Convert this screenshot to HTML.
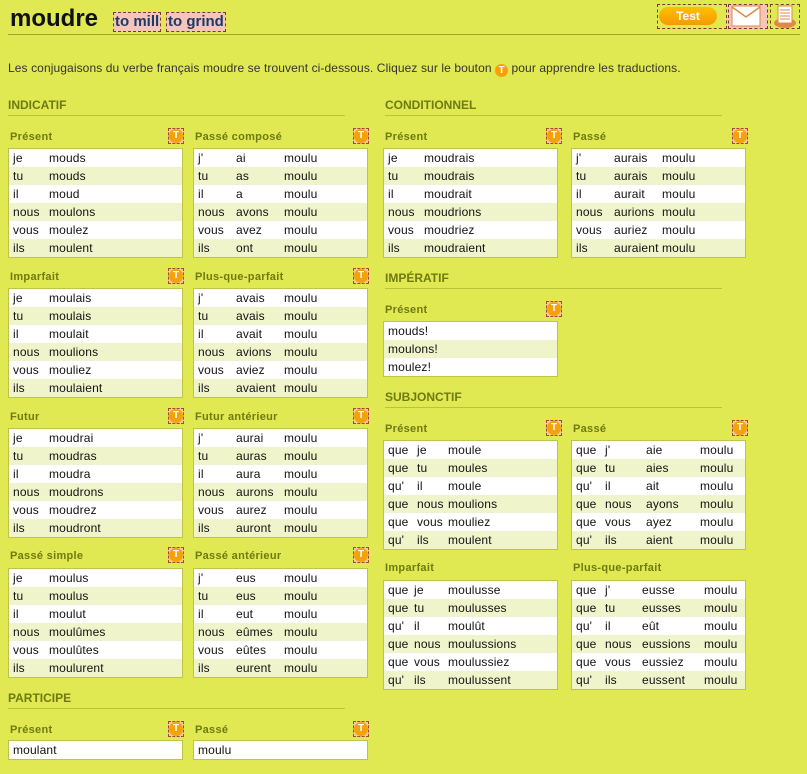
<!DOCTYPE html>
<html><head><meta charset="utf-8"><style>
body{margin:0;width:807px;height:774px;background:#e0e951;font-family:"Liberation Sans",Arial,sans-serif;position:relative;overflow:hidden;color:#111}
.a{position:absolute}
.h{position:absolute;font-size:12px;font-weight:bold;color:#6f7a10;width:337px;border-bottom:1px solid #b9c43a;padding-bottom:3px}
.l{position:absolute;font-size:11px;font-weight:bold;color:#6f7a10;letter-spacing:0.3px}
.t{position:absolute;width:14px;height:14px;border:1px dashed #a05020;background:#f7c7a0}
.t:after{content:"T";position:absolute;left:0;top:0;width:14px;height:14px;border-radius:50%;background:#f5a20a;color:#fff;font-size:10px;font-weight:bold;text-align:center;line-height:14px}
.b{position:absolute;width:173px;border:1px solid #bcc54a;background:#fff}
.r{height:18px;line-height:18px;font-size:12px;display:grid;padding-left:4px;white-space:nowrap;letter-spacing:0.15px}
.r:nth-child(even){background:#eff4cb}
.s .r{grid-template-columns:36px 1fr}
.c .r{grid-template-columns:38px 48px 1fr}
.q .r{grid-template-columns:29px 31px 1fr}
.qp .r{grid-template-columns:29px 41px 54px 1fr}
.qi .r{grid-template-columns:26px 34px 1fr}
.qq .r{grid-template-columns:29px 37px 62px 1fr}
.o .r{grid-template-columns:1fr}
</style></head><body>
<div class="a" style="left:10px;top:5px;font-size:24px;font-weight:bold">moudre</div>
<div class="a" style="left:113px;top:12px;font-size:15px;font-weight:bold;color:#1a3a6a;background:#f6c4b8;border:1px dashed #7a3a2a;padding:0 1px;line-height:18px">to mill</div>
<div class="a" style="left:166px;top:12px;font-size:15px;font-weight:bold;color:#1a3a6a;background:#f6c4b8;border:1px dashed #7a3a2a;padding:0 1px;line-height:18px">to grind</div>
<div class="a" style="left:657px;top:4px;width:68px;height:23px;border:1px dashed #7a3a2a"><div style="margin:2px 0 0 1px;width:58px;height:18px;border-radius:9px;background:linear-gradient(#ffc000,#f59a00);color:#fff;font-weight:bold;font-size:12px;text-align:center;line-height:18px">Test</div></div>
<div class="a" style="left:728px;top:4px;width:38px;height:23px;border:1px dashed #7a3a2a;background:#f6c4b8"><svg width="32" height="22" style="margin-left:2px"><rect x="1" y="1" width="28" height="20" fill="#fff" stroke="#e08a40"/><path d="M1 2 L15 12 L29 2" fill="none" stroke="#e08a40" stroke-width="1.5"/></svg></div>
<div class="a" style="left:770px;top:4px;width:28px;height:23px;border:1px dashed #7a3a2a"><svg width="28" height="23"><ellipse cx="14" cy="18" rx="11" ry="5" fill="#e08a40"/><rect x="7" y="1" width="14" height="17" fill="#fff" stroke="#e08a40"/><path d="M9 5h10M9 8h10M9 11h10M9 14h10" stroke="#e08a40"/></svg></div>
<div class="a" style="left:8px;top:34px;width:792px;height:1px;background:#9aa52a"></div>
<div class="a" style="left:8px;top:61px;font-size:12px;color:#333;letter-spacing:0.1px">Les conjugaisons du verbe français moudre se trouvent ci-dessous. Cliquez sur le bouton <span style="display:inline-block;width:13px;height:13px;border-radius:50%;background:#f5a20a;color:#fff;font-size:10px;font-weight:bold;text-align:center;line-height:13px;vertical-align:-1px;letter-spacing:0">T</span> pour apprendre les traductions.</div>

<div class="h" style="left:8px;top:98px">INDICATIF</div>
<div class="h" style="left:385px;top:98px">CONDITIONNEL</div>
<div class="h" style="left:8px;top:691px">PARTICIPE</div>
<div class="h" style="left:385px;top:271px">IMPÉRATIF</div>
<div class="h" style="left:385px;top:390px">SUBJONCTIF</div>

<div class="l" style="left:10px;top:131px">Présent</div><div class="t" style="left:168px;top:128px"></div>
<div class="b s" style="left:8px;top:148px"><div class="r"><span>je</span><span>mouds</span></div><div class="r"><span>tu</span><span>mouds</span></div><div class="r"><span>il</span><span>moud</span></div><div class="r"><span>nous</span><span>moulons</span></div><div class="r"><span>vous</span><span>moulez</span></div><div class="r"><span>ils</span><span>moulent</span></div></div>
<div class="l" style="left:195px;top:131px">Passé composé</div><div class="t" style="left:353px;top:128px"></div>
<div class="b c" style="left:193px;top:148px"><div class="r"><span>j'</span><span>ai</span><span>moulu</span></div><div class="r"><span>tu</span><span>as</span><span>moulu</span></div><div class="r"><span>il</span><span>a</span><span>moulu</span></div><div class="r"><span>nous</span><span>avons</span><span>moulu</span></div><div class="r"><span>vous</span><span>avez</span><span>moulu</span></div><div class="r"><span>ils</span><span>ont</span><span>moulu</span></div></div>

<div class="l" style="left:10px;top:271px">Imparfait</div><div class="t" style="left:168px;top:268px"></div>
<div class="b s" style="left:8px;top:288px"><div class="r"><span>je</span><span>moulais</span></div><div class="r"><span>tu</span><span>moulais</span></div><div class="r"><span>il</span><span>moulait</span></div><div class="r"><span>nous</span><span>moulions</span></div><div class="r"><span>vous</span><span>mouliez</span></div><div class="r"><span>ils</span><span>moulaient</span></div></div>
<div class="l" style="left:195px;top:271px">Plus-que-parfait</div><div class="t" style="left:353px;top:268px"></div>
<div class="b c" style="left:193px;top:288px"><div class="r"><span>j'</span><span>avais</span><span>moulu</span></div><div class="r"><span>tu</span><span>avais</span><span>moulu</span></div><div class="r"><span>il</span><span>avait</span><span>moulu</span></div><div class="r"><span>nous</span><span>avions</span><span>moulu</span></div><div class="r"><span>vous</span><span>aviez</span><span>moulu</span></div><div class="r"><span>ils</span><span>avaient</span><span>moulu</span></div></div>

<div class="l" style="left:10px;top:411px">Futur</div><div class="t" style="left:168px;top:408px"></div>
<div class="b s" style="left:8px;top:428px"><div class="r"><span>je</span><span>moudrai</span></div><div class="r"><span>tu</span><span>moudras</span></div><div class="r"><span>il</span><span>moudra</span></div><div class="r"><span>nous</span><span>moudrons</span></div><div class="r"><span>vous</span><span>moudrez</span></div><div class="r"><span>ils</span><span>moudront</span></div></div>
<div class="l" style="left:195px;top:411px">Futur antérieur</div><div class="t" style="left:353px;top:408px"></div>
<div class="b c" style="left:193px;top:428px"><div class="r"><span>j'</span><span>aurai</span><span>moulu</span></div><div class="r"><span>tu</span><span>auras</span><span>moulu</span></div><div class="r"><span>il</span><span>aura</span><span>moulu</span></div><div class="r"><span>nous</span><span>aurons</span><span>moulu</span></div><div class="r"><span>vous</span><span>aurez</span><span>moulu</span></div><div class="r"><span>ils</span><span>auront</span><span>moulu</span></div></div>

<div class="l" style="left:10px;top:550px">Passé simple</div><div class="t" style="left:168px;top:547px"></div>
<div class="b s" style="left:8px;top:568px"><div class="r"><span>je</span><span>moulus</span></div><div class="r"><span>tu</span><span>moulus</span></div><div class="r"><span>il</span><span>moulut</span></div><div class="r"><span>nous</span><span>moulûmes</span></div><div class="r"><span>vous</span><span>moulûtes</span></div><div class="r"><span>ils</span><span>moulurent</span></div></div>
<div class="l" style="left:195px;top:550px">Passé antérieur</div><div class="t" style="left:353px;top:547px"></div>
<div class="b c" style="left:193px;top:568px"><div class="r"><span>j'</span><span>eus</span><span>moulu</span></div><div class="r"><span>tu</span><span>eus</span><span>moulu</span></div><div class="r"><span>il</span><span>eut</span><span>moulu</span></div><div class="r"><span>nous</span><span>eûmes</span><span>moulu</span></div><div class="r"><span>vous</span><span>eûtes</span><span>moulu</span></div><div class="r"><span>ils</span><span>eurent</span><span>moulu</span></div></div>

<div class="l" style="left:10px;top:724px">Présent</div><div class="t" style="left:168px;top:721px"></div>
<div class="b o" style="left:8px;top:740px"><div class="r" style="background:#fff">moulant</div></div>
<div class="l" style="left:195px;top:724px">Passé</div><div class="t" style="left:353px;top:721px"></div>
<div class="b o" style="left:193px;top:740px"><div class="r" style="background:#fff">moulu</div></div>

<div class="l" style="left:385px;top:131px">Présent</div><div class="t" style="left:546px;top:128px"></div>
<div class="b s" style="left:383px;top:148px"><div class="r"><span>je</span><span>moudrais</span></div><div class="r"><span>tu</span><span>moudrais</span></div><div class="r"><span>il</span><span>moudrait</span></div><div class="r"><span>nous</span><span>moudrions</span></div><div class="r"><span>vous</span><span>moudriez</span></div><div class="r"><span>ils</span><span>moudraient</span></div></div>
<div class="l" style="left:573px;top:131px">Passé</div><div class="t" style="left:732px;top:128px"></div>
<div class="b c" style="left:571px;top:148px"><div class="r"><span>j'</span><span>aurais</span><span>moulu</span></div><div class="r"><span>tu</span><span>aurais</span><span>moulu</span></div><div class="r"><span>il</span><span>aurait</span><span>moulu</span></div><div class="r"><span>nous</span><span>aurions</span><span>moulu</span></div><div class="r"><span>vous</span><span>auriez</span><span>moulu</span></div><div class="r"><span>ils</span><span>auraient</span><span>moulu</span></div></div>

<div class="l" style="left:385px;top:304px">Présent</div><div class="t" style="left:546px;top:301px"></div>
<div class="b o" style="left:383px;top:321px"><div class="r">mouds!</div><div class="r">moulons!</div><div class="r">moulez!</div></div>

<div class="l" style="left:385px;top:423px">Présent</div><div class="t" style="left:546px;top:420px"></div>
<div class="b q" style="left:383px;top:440px"><div class="r"><span>que</span><span>je</span><span>moule</span></div><div class="r"><span>que</span><span>tu</span><span>moules</span></div><div class="r"><span>qu'</span><span>il</span><span>moule</span></div><div class="r"><span>que</span><span>nous</span><span>moulions</span></div><div class="r"><span>que</span><span>vous</span><span>mouliez</span></div><div class="r"><span>qu'</span><span>ils</span><span>moulent</span></div></div>
<div class="l" style="left:573px;top:423px">Passé</div><div class="t" style="left:732px;top:420px"></div>
<div class="b qp" style="left:571px;top:440px"><div class="r"><span>que</span><span>j'</span><span>aie</span><span>moulu</span></div><div class="r"><span>que</span><span>tu</span><span>aies</span><span>moulu</span></div><div class="r"><span>qu'</span><span>il</span><span>ait</span><span>moulu</span></div><div class="r"><span>que</span><span>nous</span><span>ayons</span><span>moulu</span></div><div class="r"><span>que</span><span>vous</span><span>ayez</span><span>moulu</span></div><div class="r"><span>qu'</span><span>ils</span><span>aient</span><span>moulu</span></div></div>

<div class="l" style="left:385px;top:562px">Imparfait</div>
<div class="b qi" style="left:383px;top:580px"><div class="r"><span>que</span><span>je</span><span>moulusse</span></div><div class="r"><span>que</span><span>tu</span><span>moulusses</span></div><div class="r"><span>qu'</span><span>il</span><span>moulût</span></div><div class="r"><span>que</span><span>nous</span><span>moulussions</span></div><div class="r"><span>que</span><span>vous</span><span>moulussiez</span></div><div class="r"><span>qu'</span><span>ils</span><span>moulussent</span></div></div>
<div class="l" style="left:573px;top:562px">Plus-que-parfait</div>
<div class="b qq" style="left:571px;top:580px"><div class="r"><span>que</span><span>j'</span><span>eusse</span><span>moulu</span></div><div class="r"><span>que</span><span>tu</span><span>eusses</span><span>moulu</span></div><div class="r"><span>qu'</span><span>il</span><span>eût</span><span>moulu</span></div><div class="r"><span>que</span><span>nous</span><span>eussions</span><span>moulu</span></div><div class="r"><span>que</span><span>vous</span><span>eussiez</span><span>moulu</span></div><div class="r"><span>qu'</span><span>ils</span><span>eussent</span><span>moulu</span></div></div>
</body></html>
